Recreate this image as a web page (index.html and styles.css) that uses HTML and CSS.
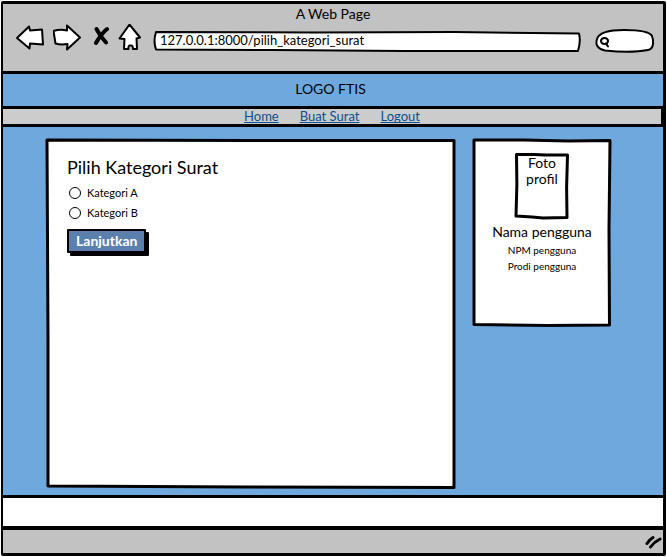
FILE: index.html
```html
<!DOCTYPE html>
<html lang="id">
<head>
<meta charset="utf-8">
<title>A Web Page</title>
<link rel="stylesheet" href="styles.css">
</head>
<body>
<div class="window">
  <header class="chrome">
    <div class="chrome-title">A Web Page</div>
    <div class="toolbar">
      <button class="tool" type="button" aria-label="Back">
        <svg width="30" height="28" viewBox="0 0 30 28"><path class="ink" d="M2 14L14 2.500L15 6.500L27 5.500L28 20.500L15 19.500L14.500 24.500Z"/></svg>
      </button>
      <button class="tool" type="button" aria-label="Forward">
        <svg width="30" height="28" viewBox="0 0 30 28"><path class="ink" d="M27 13.500L14 1.500V6.500Q7 5 .5 7L2.500 19.500Q8 21 14.500 20L14 25.500Z"/></svg>
      </button>
      <button class="tool" type="button" aria-label="Stop">
        <svg width="18" height="28" viewBox="0 0 18 28"><path class="cross" d="M5.500 5Q9 12 15 18.500M16 5Q10 10 5 19"/></svg>
      </button>
      <button class="tool" type="button" aria-label="Home">
        <svg width="24" height="28" viewBox="0 0 24 28"><path class="ink" d="M12.500 .5L23 13.500L19.500 14.500L20 25H16Q16 21 13.500 21.500Q11 21 11.500 25H7L7.500 15L2.500 14.500Z"/></svg>
      </button>
      <div class="address">
        <svg class="sketch" viewBox="0 0 426 21" preserveAspectRatio="none"><path class="ink" d="M3 1L160 1.500L300 1L424 2.500Q426 10 423 20L250 20L120 19L3 18.500Q0 10 3 1Z"/></svg>
        <input class="field" type="text" aria-label="Address" value="127.0.0.1:8000/pilih_kategori_surat">
      </div>
      <div class="search">
        <svg class="sketch" viewBox="0 0 60 26" preserveAspectRatio="none"><path class="ink" d="M10 22.500C3 21 0 17 2 11C4 4 15 2 29 2C44 2 55 4 57 8C59 13 59 21 53 22C38 25 24 24 10 22.500Z"/></svg>
        <svg class="search-icon" width="12" height="13" viewBox="0 0 12 13"><ellipse cx="5.500" cy="5" rx="3.500" ry="3"/><path d="M7 7.500L9 10.500"/></svg>
        <input class="field search-input" type="search" aria-label="Search">
      </div>
    </div>
  </header>
  <div class="logo">LOGO FTIS</div>
  <nav class="nav">
    <a href="#">Home</a>
    <a href="#">Buat Surat</a>
    <a href="#">Logout</a>
  </nav>
  <main class="content">
    <form class="card">
      <svg class="sketch" viewBox="0 0 410 350" preserveAspectRatio="none"><path class="ink" d="M1 1L200 1.500L408 1.500L408 180L408 348.500L200 348L2 347L2 200Z"/></svg>
      <h1>Pilih Kategori Surat</h1>
      <label class="option"><input type="radio" name="kategori">Kategori A</label>
      <label class="option"><input type="radio" name="kategori">Kategori B</label>
      <button class="submit" type="button">Lanjutkan</button>
    </form>
    <aside class="profile">
      <svg class="sketch" viewBox="0 0 138 188" preserveAspectRatio="none"><path class="ink" d="M1 1L50 1L95 2L137 1.500L136 90L136.500 186L75 186.500L1 185.500L1 90Z"/></svg>
      <div class="photo">
        <svg class="sketch" viewBox="0 0 54 66" preserveAspectRatio="none"><path class="ink" d="M1.500 1.500L20 1.500L30 2L52.500 2Q51 34 52 64.500L28 65L17 64L1 63Q2.500 32 1.500 1.500Z"/></svg>
        <span>Foto profil</span>
      </div>
      <div class="name">Nama pengguna</div>
      <div class="detail">NPM pengguna</div>
      <div class="detail">Prodi pengguna</div>
    </aside>
  </main>
  <footer class="footer"></footer>
  <div class="status">
    <svg width="18" height="14" viewBox="0 0 18 14"><path d="M2 8.500Q4 5 8 2.500M5.500 12Q9 7 15 4"/></svg>
  </div>
</div>
</body>
</html>
```
FILE: styles.css
```css
* { box-sizing: border-box; }

body {
  margin: 0;
  padding: 1px;
  background: #fff;
  color: #000;
  font: 14px/16px Lato, "Liberation Sans", sans-serif;
}

button, input { font: inherit; color: inherit; }

.window {
  display: flex;
  flex-direction: column;
  min-height: calc(100vh - 2px);
  border: 3px solid #000;
  border-left-width: 2px;
  border-radius: 2px;
  background: #6fa8dc;
}

.chrome {
  padding: 2px 0 17px;
  border-bottom: 3px solid #000;
  background: #c2c2c2;
}

.chrome-title { text-align: center; }

.toolbar {
  display: flex;
  align-items: center;
  padding: 0 8px 0 12px;
}

.tool {
  display: block;
  flex: none;
  margin-right: 8px;
  padding: 0;
  border: 0;
  background: none;
}

.tool svg { display: block; }

.ink {
  fill: #fff;
  stroke: #000;
  stroke-width: 2;
  stroke-linejoin: round;
  vector-effect: non-scaling-stroke;
}

.cross {
  fill: none;
  stroke: #000;
  stroke-width: 4;
  stroke-linecap: round;
}

/* Hand-drawn outline stretched behind its box */
.sketch {
  position: absolute;
  inset: 0;
  z-index: -1;
  width: 100%;
  height: 100%;
  overflow: visible;
}

.address, .search, .card, .profile, .photo {
  position: relative;
  isolation: isolate;
}

.card .ink, .profile .ink { stroke-width: 3; }

.address {
  flex: 1;
  min-width: 0;
  height: 21px;
  margin: 6px 14px 0 4px;
}

.search {
  flex: none;
  width: 60px;
  height: 26px;
  margin-top: 6px;
}

.field {
  display: block;
  width: 100%;
  height: 100%;
  padding: 0 7px 2px;
  border: 0;
  background: none;
  font-size: 13px;
}

.search-input { padding-left: 18px; }

.search-icon {
  position: absolute;
  left: 4px;
  top: 8px;
  fill: none;
  stroke: #000;
  stroke-width: 2;
  stroke-linecap: round;
}

.logo {
  padding: 7px 5px 9px 0;
  border-bottom: 3px solid #000;
  text-align: center;
}

.nav {
  display: flex;
  justify-content: center;
  gap: 21px;
  border-right: 2px solid #000;
  border-bottom: 3px solid #000;
  background: #ccc;
  font-size: 13px;
  line-height: 15px;
}

.nav a {
  color: #0b4f91;
  text-decoration-thickness: 1px;
  text-decoration-skip-ink: none;
  text-underline-offset: 1px;
}

.content {
  display: grid;
  grid-template-columns: minmax(0, 1fr) 138px;
  gap: 17px;
  flex: 1;
  align-items: start;
  padding: 12px 52px 6px 43px;
}

.card {
  align-self: stretch;
  min-height: 350px;
  padding: 18px 21px;
}

h1 {
  margin: 0 0 6px;
  font-size: 18px;
  font-weight: 400;
  line-height: 20px;
}

.option {
  display: flex;
  align-items: center;
  gap: 6px;
  height: 20px;
  padding-left: 2px;
  font-size: 11px;
}

.option input {
  appearance: none;
  width: 12px;
  height: 12px;
  margin: 0;
  border: 1px solid #000;
  border-radius: 50%;
  background: #fff;
}

.option input:checked { box-shadow: inset 0 0 0 3px #fff; background: #000; }

.submit {
  margin-top: 6px;
  padding: 2px 7px;
  border: 2px solid #000;
  border-radius: 1px;
  background: #5b80ad;
  box-shadow: 3px 3px 0 #000;
  color: #fff;
  font-weight: 700;
}

.profile {
  min-height: 188px;
  padding: 14px 8px;
  text-align: center;
}

.photo {
  width: 54px;
  height: 66px;
  margin: 0 auto 5px;
  padding: 2px 6px;
}

.name { margin-bottom: 2px; }

.detail { font-size: 10px; }

.footer {
  height: 31px;
  border-top: 3px solid #000;
  background: #fff;
}

.status {
  display: flex;
  justify-content: flex-end;
  align-items: center;
  height: 27px;
  border-top: 4px solid #000;
  background: #c2c2c2;
}

.status path {
  fill: none;
  stroke: #000;
  stroke-width: 3;
  stroke-linecap: round;
}
```
